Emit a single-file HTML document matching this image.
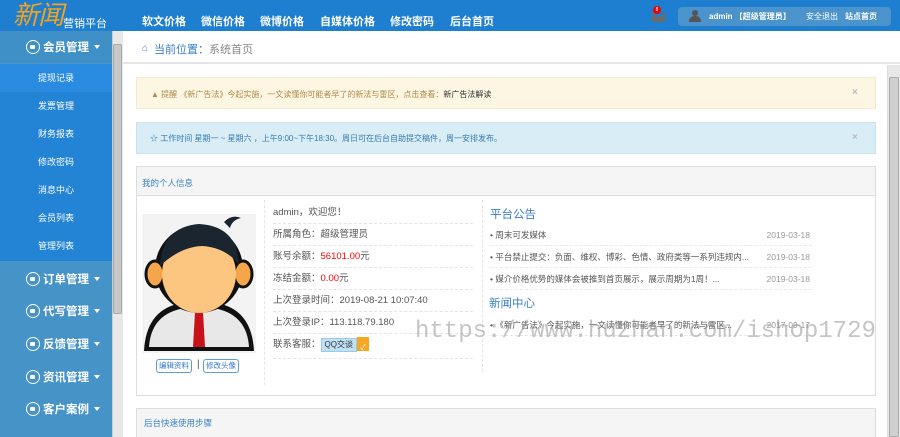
<!DOCTYPE html>
<html><head><meta charset="utf-8"><style>
*{margin:0;padding:0;box-sizing:border-box}
html,body{width:900px;height:437px;overflow:hidden}
body{font-family:"Liberation Sans","Noto Sans CJK SC",sans-serif;font-size:9px;color:#555;background:#fff;position:relative}
.a{position:absolute}
#top{left:0;top:0;width:900px;height:31px;background:#1e7ed0}
.logo{left:13px;top:0px;color:#f7a21b;font-size:26px;font-style:italic;letter-spacing:-1px;line-height:30px}
.logo2{left:63px;top:15px;color:#fff;font-size:11px}
.nav{top:13px;color:#fff;font-size:11px;font-weight:bold}
.ubox{left:678px;top:7px;width:213px;height:19px;background:#4b93cb;border-radius:4px}
#side{left:0;top:31px;width:112px;height:406px;background:#4693c8;overflow:hidden}
.sh{left:0;width:112px;height:32px;color:#fff;font-size:11.5px;font-weight:bold}
.sh .c{position:absolute;left:26px;top:9px;width:14px;height:14px;border:1.5px solid #fff;border-radius:50%}
.sh .c:after{content:"";position:absolute;left:3px;top:3.5px;width:5px;height:4px;background:#fff;border-radius:1px}
.sh .t{position:absolute;left:43px;top:8px}
.sh .ar{position:absolute;left:94px;top:14px;border:3.5px solid transparent;border-top:4px solid #fff}
.si{left:0;width:112px;height:28px;color:#fff;font-size:9px;text-align:center;line-height:28px}
.sb{background:#e8e8e8}
.pnl{border:1px solid #ddd;background:#fff}
.row{left:273px;width:200px;height:22px;border-bottom:1px dashed #e4e4e4;font-size:9.5px;color:#555;line-height:22px}
.nl{left:490px;width:322px;height:22px;border-bottom:1px dashed #e8e8e8;font-size:8.5px;line-height:22px;color:#555}
.nl i{position:absolute;right:2px;font-style:normal;color:#999}
.btn{top:359px;height:14px;border:1px solid #5b9de0;border-radius:3px;color:#3477c8;font-size:7.5px;line-height:12px;padding:0 2px}
</style></head><body>
<div id="top" class="a">
<div class="a logo">新闻</div><div class="a logo2">营销平台</div>
<div class="a nav" style="left:142px">软文价格</div>
<div class="a nav" style="left:201px">微信价格</div>
<div class="a nav" style="left:260px">微博价格</div>
<div class="a nav" style="left:320px">自媒体价格</div>
<div class="a nav" style="left:390px">修改密码</div>
<div class="a nav" style="left:450px">后台首页</div>
<div class="a" style="left:652px;top:12px;width:13px;height:10px;background:#6b6b6b;clip-path:polygon(0 0,50% 60%,100% 0,100% 100%,0 100%)"></div>
<div class="a" style="left:653px;top:6px;width:8px;height:8px;background:#e00;border-radius:50%;color:#fff;font-size:5px;text-align:center;line-height:8px">8</div>
<div class="a ubox">
<div class="a" style="left:14px;top:3px;width:6px;height:6px;background:#555;border-radius:50%"></div>
<div class="a" style="left:11px;top:9px;width:12px;height:6px;background:#555;border-radius:5px 5px 0 0"></div>
<div class="a" style="left:31px;top:4px;color:#fff;font-size:8px;font-weight:bold">admin 【超级管理员】</div>
<div class="a" style="left:128px;top:4px;color:#fff;font-size:8px">安全退出</div>
<div class="a" style="left:167px;top:4px;color:#fff;font-size:8px;font-weight:bold">站点首页</div>
</div></div>
<div id="side" class="a">
<div class="a sh" style="top:0;background:#3f90c7"><span class="c"></span><span class="t">会员管理</span><span class="ar"></span></div>
<div class="a" style="left:0;top:33px;width:112px;height:197px;background:#2384d6"></div>
<div class="a si" style="top:33px;background:#2a8ce0">提现记录</div>
<div class="a si" style="top:61px">发票管理</div>
<div class="a si" style="top:89px">财务报表</div>
<div class="a si" style="top:117px">修改密码</div>
<div class="a si" style="top:145px">消息中心</div>
<div class="a si" style="top:173px">会员列表</div>
<div class="a si" style="top:201px">管理列表</div>
<div class="a sh" style="top:232px"><span class="c"></span><span class="t">订单管理</span><span class="ar"></span></div>
<div class="a sh" style="top:264px"><span class="c"></span><span class="t">代写管理</span><span class="ar"></span></div>
<div class="a sh" style="top:297px"><span class="c"></span><span class="t">反馈管理</span><span class="ar"></span></div>
<div class="a sh" style="top:330px"><span class="c"></span><span class="t">资讯管理</span><span class="ar"></span></div>
<div class="a sh" style="top:362px"><span class="c"></span><span class="t">客户案例</span><span class="ar"></span></div>
</div>
<div class="a sb" style="left:112px;top:31px;width:11px;height:406px;border-left:1px solid #ccc"></div>
<div class="a" style="left:113px;top:44px;width:9px;height:270px;background:#c8c8c8;border:1px solid #aaa;border-radius:2px"></div>
<div class="a" style="left:123px;top:31px;width:777px;height:33px;border-bottom:2px solid #e5e5e5;background:#fff"></div>
<div class="a" style="left:142px;top:43px;font-size:10px;color:#3a80c8">⌂</div>
<div class="a" style="left:154px;top:41px;font-size:11px;color:#3a80c8">当前位置：<span style="color:#888">系统首页</span></div>
<div class="a sb" style="left:887px;top:65px;width:13px;height:372px;border-left:1px solid #ddd"></div>
<div class="a" style="left:889px;top:77px;width:10px;height:360px;background:#d0d0d0;border:1px solid #aaa;border-radius:2px"></div>
<div class="a" style="left:136px;top:77px;width:740px;height:32px;background:#fcf6e2;border:1px solid #f3ead0"></div>
<div class="a" style="left:151px;top:89px;font-size:8px;color:#b08a4a">▲ 提醒 《新广告法》今起实施，一文读懂你可能者早了的新法与雷区，点击查看：<span style="color:#333">新广告法解读</span></div>
<div class="a" style="left:852px;top:87px;color:#bbb;font-size:10px;font-weight:bold">×</div>
<div class="a" style="left:136px;top:122px;width:740px;height:32px;background:#d9edf7;border:1px solid #c8e3ef"></div>
<div class="a" style="left:150px;top:133px;font-size:8px;color:#3a7aa8">☆ 工作时间 星期一 ~ 星期六 ，上午9:00~下午18:30。周日可在后台自助提交稿件，周一安排发布。</div>
<div class="a" style="left:852px;top:132px;color:#bbb;font-size:10px;font-weight:bold">×</div>
<div class="a pnl" style="left:136px;top:166px;width:740px;height:230px"></div>
<div class="a" style="left:137px;top:167px;width:738px;height:29px;background:#f5f5f5;border-bottom:1px solid #ddd"></div>
<div class="a" style="left:142px;top:177px;font-size:8.5px;color:#3a80c8">我的个人信息</div>
<div class="a" style="left:264px;top:200px;height:185px;border-left:1px dashed #e4e4e4"></div>
<div class="a" style="left:482px;top:200px;height:172px;border-left:1px dashed #e4e4e4"></div>
<svg class="a" style="left:142px;top:214px" width="114" height="139" viewBox="0 0 114 139">
<rect width="114" height="139" fill="#f3f3f3"/>
<path d="M2 137 Q4 98 35 90 L79 90 Q110 98 112 137Z" fill="#111"/>
<path d="M7 133 Q9 102 38 95 L76 95 Q105 102 107 133Z" fill="#e8e8e8"/>
<path d="M53 98 L61 98 L63 133 L51 133Z" fill="#c8121a"/>
<ellipse cx="57" cy="55" rx="44" ry="44" fill="#111"/>
<ellipse cx="13" cy="60" rx="9" ry="13" fill="#f5a54a" stroke="#111" stroke-width="3"/>
<ellipse cx="101" cy="60" rx="9" ry="13" fill="#f5a54a" stroke="#111" stroke-width="3"/>
<ellipse cx="57" cy="60" rx="37" ry="39" fill="#fcc580"/>
<path d="M18 52 Q20 13 57 10 Q95 12 97 50 Q82 33 60 32 Q38 33 18 52Z" fill="#1a2530"/>
<path d="M82 8 Q90 0 99 4 Q90 6 88 14Z" fill="#1a2530"/>
</svg>
<div class="a btn" style="left:156px">编辑资料</div>
<div class="a" style="left:197px;top:359px;color:#555;font-size:10px">|</div>
<div class="a btn" style="left:203px">修改头像</div>
<div class="a row" style="top:202px">admin，欢迎您！</div>
<div class="a row" style="top:224px">所属角色：超级管理员</div>
<div class="a row" style="top:246px">账号余额：<span style="color:#f00">56101.00</span>元</div>
<div class="a row" style="top:268px">冻结金额：<span style="color:#f00">0.00</span>元</div>
<div class="a row" style="top:290px">上次登录时间：2019-08-21 10:07:40</div>
<div class="a row" style="top:312px">上次登录IP：113.118.79.180</div>
<div class="a row" style="top:334px;height:25px">联系客服：<span style="display:inline-block;background:#bfe0f5;border:1px solid #9cc9e8;font-size:8px;line-height:12px;padding:0 3px;color:#333">QQ交谈</span><span style="display:inline-block;background:#f5a623;color:#fff;width:12px;height:14px;font-size:8px;text-align:center;vertical-align:middle">✓</span></div>
<div class="a" style="left:490px;top:206px;font-size:11.5px;color:#3a80c8">平台公告</div>
<div class="a nl" style="top:224px">• 周末可发媒体<i>2019-03-18</i></div>
<div class="a nl" style="top:246px">• 平台禁止提交：负面、维权、博彩、色情、政府类等一系列违规内...<i>2019-03-18</i></div>
<div class="a nl" style="top:268px">• 媒介价格优势的媒体会被推到首页展示，展示周期为1周！...<i>2019-03-18</i></div>
<div class="a" style="left:489px;top:295px;font-size:11.5px;color:#3a80c8">新闻中心</div>
<div class="a nl" style="top:314px">• 《新广告法》今起实施，一文读懂你可能者早了的新法与雷区...<i>2017-09-17</i></div>
<div class="a" style="left:415px;top:318px;width:460px;overflow:hidden;font-family:'Liberation Mono',monospace;font-size:24px;color:rgba(150,150,150,0.55);white-space:nowrap">https://www.huzhan.com/ishop17297</div>
<div class="a pnl" style="left:136px;top:408px;width:740px;height:29px;background:#f5f5f5;border-bottom:none"></div>
<div class="a" style="left:144px;top:417px;font-size:8.5px;color:#3a80c8">后台快速使用步骤</div>
</body></html>
